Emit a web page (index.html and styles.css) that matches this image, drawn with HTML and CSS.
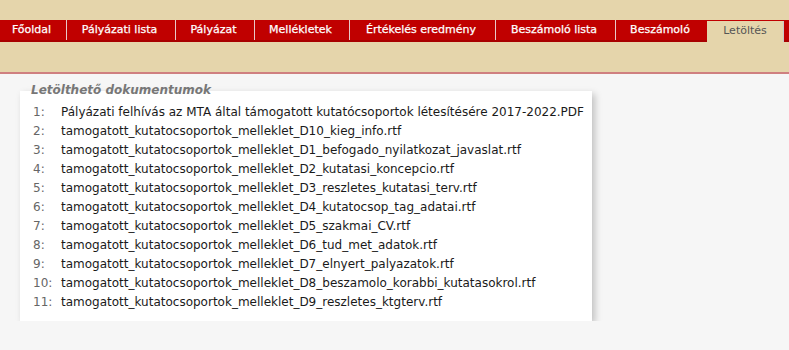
FILE: index.html
```html
<!DOCTYPE html>
<html lang="hu">
<head>
<meta charset="utf-8">
<title>Letöltés</title>
<link rel="stylesheet" href="styles.css">
</head>
<body>
<div class="header">
  <nav class="nav">
    <a class="tab t1">Főoldal</a>
    <a class="tab t2">Pályázati lista</a>
    <a class="tab t3">Pályázat</a>
    <a class="tab t4">Mellékletek</a>
    <a class="tab t5">Értékelés eredmény</a>
    <a class="tab t6">Beszámoló lista</a>
    <a class="tab t7">Beszámoló</a>
    <a class="tab active">Letöltés</a>
  </nav>
</div>
<main class="content">
  <section class="card">
    <h2 class="title">Letölthető dokumentumok</h2>
    <ol class="list">
      <li><span class="num">1:</span><span class="file">Pályázati felhívás az MTA által támogatott kutatócsoportok létesítésére 2017-2022.PDF</span></li>
      <li><span class="num">2:</span><span class="file">tamogatott_kutatocsoportok_melleklet_D10_kieg_info.rtf</span></li>
      <li><span class="num">3:</span><span class="file">tamogatott_kutatocsoportok_melleklet_D1_befogado_nyilatkozat_javaslat.rtf</span></li>
      <li><span class="num">4:</span><span class="file">tamogatott_kutatocsoportok_melleklet_D2_kutatasi_koncepcio.rtf</span></li>
      <li><span class="num">5:</span><span class="file">tamogatott_kutatocsoportok_melleklet_D3_reszletes_kutatasi_terv.rtf</span></li>
      <li><span class="num">6:</span><span class="file">tamogatott_kutatocsoportok_melleklet_D4_kutatocsop_tag_adatai.rtf</span></li>
      <li><span class="num">7:</span><span class="file">tamogatott_kutatocsoportok_melleklet_D5_szakmai_CV.rtf</span></li>
      <li><span class="num">8:</span><span class="file">tamogatott_kutatocsoportok_melleklet_D6_tud_met_adatok.rtf</span></li>
      <li><span class="num">9:</span><span class="file">tamogatott_kutatocsoportok_melleklet_D7_elnyert_palyazatok.rtf</span></li>
      <li><span class="num">10:</span><span class="file">tamogatott_kutatocsoportok_melleklet_D8_beszamolo_korabbi_kutatasokrol.rtf</span></li>
      <li><span class="num">11:</span><span class="file">tamogatott_kutatocsoportok_melleklet_D9_reszletes_ktgterv.rtf</span></li>
    </ol>
  </section>
</main>
</body>
</html>
```
FILE: styles.css
```css
html, body {
  margin: 0;
  padding: 0;
}
* {
  box-sizing: border-box;
}
body {
  background: #f6f6f6;
  font-family: "DejaVu Sans", Verdana, sans-serif;
  font-size: 12px;
  color: #222;
}
.header {
  background: #e5d5ab;
  padding-top: 20px;
  height: 74px;
  border-bottom: 2px solid #cf8080;
}
.nav {
  display: flex;
  background: #c00000;
  height: 22px;
  border-bottom: 2px solid #a80000;
}
.tab {
  display: block;
  flex: none;
  color: #fff;
  font-size: 11px;
  line-height: 20px;
  text-align: center;
  padding: 0 3px 0 0;
  border-right: 1px solid #e8c8c8;
  white-space: nowrap;
  -webkit-text-stroke: 0.25px #fff;
}
.t1 { width: 67px; }
.t2 { width: 109px; }
.t3 { width: 79px; }
.t4 { width: 95px; }
.t5 { width: 146px; }
.t6 { width: 120px; }
.t7 { width: 91px; border-right: none; }
.tab.active {
  margin-top: 1px;
  height: 21px;
  margin-bottom: -2px;
  width: 77px;
  padding: 0;
  background: #e5d5ab;
  color: #555;
  -webkit-text-stroke: 0;
  border-right: 1px solid #c8c8c8;
}
.content {
  padding: 17px 0 0 20px;
}
.card {
  display: flow-root;
  width: 572px;
  background: #fff;
  box-shadow: 3px 3px 7px rgba(0, 0, 0, 0.22);
  padding: 0 0 9px 0;
}
.title {
  margin: -9px 0 0 11px;
  font-size: 12px;
  font-style: italic;
  font-weight: bold;
  color: #777;
  line-height: 17px;
}
.list {
  list-style: none;
  margin: 4px 0 0 0;
  padding: 0 0 0 13px;
}
.list li {
  display: grid;
  grid-template-columns: 28px auto;
  line-height: 19px;
}
.num {
  color: #666;
}
.file {
  color: #1a1a1a;
}
```
